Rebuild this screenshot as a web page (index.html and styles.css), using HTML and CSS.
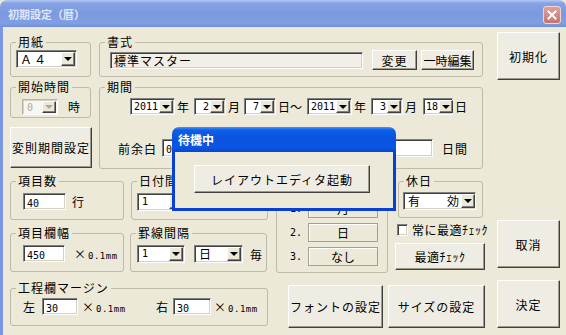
FILE: index.html
```html
<!DOCTYPE html>
<html>
<head>
    <title>初期設定（暦）</title>
    <link rel="stylesheet" href="styles.css">
</head>
<body>
<div class="window">
    <div class="titlebar">
        <span class="title">初期設定（暦）</span>
        <span class="close">
            <svg width="10" height="10" viewBox="0 0 10 10"><path d="M1.5 1.5L8.5 8.5M8.5 1.5L1.5 8.5" stroke="#fff" stroke-width="2" stroke-linecap="square"/></svg>
        </span>
    </div>

    <div class="client">
        <div class="main">
            <!-- paper / format -->
            <div class="row row-top">
                <fieldset class="grp grp-paper">
                    <legend>用紙</legend>
                    <div class="paper-body">
                        <div class="combo combo-paper"><span class="val">Ａ４</span><span class="arrow"></span></div>
                    </div>
                </fieldset>
                <fieldset class="grp grp-format">
                    <legend>書式</legend>
                    <div class="format-body">
                        <div class="input input-readonly input-format">標準マスター</div>
                        <button class="btn btn-change">変更</button>
                        <button class="btn btn-temp">一時編集</button>
                    </div>
                </fieldset>
            </div>

            <!-- start time / period -->
            <div class="row row-mid">
                <div class="col-left">
                    <fieldset class="grp grp-start">
                        <legend>開始時間</legend>
                        <div class="start-body">
                            <div class="combo combo-start disabled"><span class="val num">0</span><span class="arrow"></span></div>
                            <span class="unit-hour">時</span>
                        </div>
                    </fieldset>
                    <button class="btn btn-irregular">変則期間設定</button>
                </div>
                <fieldset class="grp grp-period">
                    <legend>期間</legend>
                    <div class="period-row1">
                        <div class="combo c-year"><span class="val num">2011</span><span class="arrow"></span></div>
                        <span class="u u-5">年</span>
                        <div class="combo c-md"><span class="val num">2</span><span class="arrow"></span></div>
                        <span class="u u-4">月</span>
                        <div class="combo c-md"><span class="val num">7</span><span class="arrow"></span></div>
                        <span class="u u-5">日～</span>
                        <div class="combo c-year"><span class="val num">2011</span><span class="arrow"></span></div>
                        <span class="u u-5">年</span>
                        <div class="combo c-md"><span class="val num">3</span><span class="arrow"></span></div>
                        <span class="u u-6">月</span>
                        <div class="combo c-day"><span class="val num">18</span><span class="arrow"></span></div>
                        <span class="u">日</span>
                    </div>
                    <div class="period-row2">
                        <span class="lbl-before">前余白</span>
                        <div class="input input-pre"><span class="num">0</span></div>
                        <span class="lbl-days">日間</span>
                    </div>
                </fieldset>
            </div>

            <!-- counts / widths / order / holiday -->
            <div class="row row-low">
                <div class="left-block">
                    <div class="sub-row">
                        <fieldset class="grp grp-count">
                            <legend>項目数</legend>
                            <div class="item-body">
                                <div class="input input-count"><span class="num">40</span></div>
                                <span class="unit-line">行</span>
                            </div>
                        </fieldset>
                        <fieldset class="grp grp-date">
                            <legend>日付間隔</legend>
                            <div class="date-body">
                                <div class="combo combo-rule"><span class="val val-left num">1</span><span class="arrow"></span></div>
                            </div>
                        </fieldset>
                    </div>
                    <div class="sub-row sub-row2">
                        <fieldset class="grp grp-count">
                            <legend>項目欄幅</legend>
                            <div class="item-body">
                                <div class="input input-width"><span class="num">450</span></div>
                                <span class="unit-mm unit-mm1">×<span class="mm">0.1mm</span></span>
                            </div>
                        </fieldset>
                        <fieldset class="grp grp-rule">
                            <legend>罫線間隔</legend>
                            <div class="rule-body">
                                <div class="combo combo-rule"><span class="val val-left num">1</span><span class="arrow"></span></div>
                                <div class="combo combo-unit"><span class="val val-left">日</span><span class="arrow"></span></div>
                                <span class="unit-every">毎</span>
                            </div>
                        </fieldset>
                    </div>
                </div>

                <fieldset class="grp grp-order">
                    <div class="order-body">
                        <div class="order-row"><span class="order-no">1.</span><span class="cell">月</span></div>
                        <div class="order-row"><span class="order-no">2.</span><span class="cell">日</span></div>
                        <div class="order-row"><span class="order-no">3.</span><span class="cell">なし</span></div>
                    </div>
                </fieldset>

                <div class="col-holiday">
                    <fieldset class="grp grp-holiday">
                        <legend>休日</legend>
                        <div class="holiday-body">
                            <div class="combo combo-holiday"><span class="val val-left holiday-val">有　　効</span><span class="arrow"></span></div>
                        </div>
                    </fieldset>
                    <label class="check-row"><span class="checkbox"></span><span class="check-text">常に最適ﾁｪｯｸ</span></label>
                    <button class="btn btn-check">最適ﾁｪｯｸ</button>
                </div>
            </div>

            <!-- margins / font / size -->
            <div class="row row-last">
                <fieldset class="grp grp-margin">
                    <legend>工程欄マージン</legend>
                    <div class="margin-body">
                        <span>左</span>
                        <div class="input input-left"><span class="num">30</span></div>
                        <span class="unit-mm unit-mm2">×<span class="mm">0.1mm</span></span>
                        <span class="lbl-right">右</span>
                        <div class="input input-right"><span class="num">30</span></div>
                        <span class="unit-mm unit-mm3">×<span class="mm">0.1mm</span></span>
                    </div>
                </fieldset>
                <button class="btn btn-font">フォントの設定</button>
                <button class="btn btn-size">サイズの設定</button>
            </div>
        </div>

        <div class="side">
            <button class="btn btn-side">初期化</button>
            <button class="btn btn-side btn-cancel">取消</button>
            <button class="btn btn-side btn-ok">決定</button>
        </div>
    </div>

    <!-- waiting dialog lying over the form -->
    <div class="modal">
        <div class="modal-title">待機中</div>
        <div class="modal-body">
            <button class="btn btn-launch">レイアウトエディタ起動</button>
        </div>
    </div>
</div>
</body>
</html>
```

FILE: styles.css
```css
* {
    box-sizing: border-box;
}
body {
    margin: 0;
    font-family: "Noto Sans CJK JP", sans-serif;
    font-size: 12px;
    color: #000;
    background-color: #ece9d8;
}
.window {
    position: relative;
    width: 566px;
    height: 335px;
    background-color: #ece9d8;
    overflow: hidden;
}
.titlebar {
    height: 27px;
    display: flex;
    align-items: center;
    justify-content: space-between;
    padding: 0 5px 0 8px;
    border-radius: 7px 7px 0 0;
    background: linear-gradient(to bottom, #b3c8f2 0%, #86a3e6 12%, #7b99e0 50%, #819fe4 85%, #6f8fd6 100%);
}
.title {
    color: #dfe8fa;
    font-size: 11px;
    font-weight: bold;
}
.close {
    width: 18px;
    height: 18px;
    margin-top: 2px;
    display: flex;
    align-items: center;
    justify-content: center;
    border: 1px solid #f0d6d2;
    border-radius: 3px;
    background: linear-gradient(to bottom, #dba19c, #c77470);
}
.client {
    display: flex;
    width: 566px;
    height: 308px;
    padding: 8px 0 0 7px;
    border-left: 3px solid #7b97e0;
}
.client > *,
.row > *,
.sub-row > *,
.period-row1 > *,
.period-row2 > *,
.format-body > *,
.margin-body > *,
.item-body > *,
.rule-body > * {
    flex-shrink: 0;
}
.main {
    width: 475px;
}
.side {
    width: 63px;
    margin-left: 12px;
    margin-top: -3px;
    display: flex;
    flex-direction: column;
}

/* generic controls */
.row {
    display: flex;
    align-items: flex-start;
}
.grp {
    margin: 0;
    padding: 0;
    min-width: 0;
    border: 1px solid #bdbaa9;
    border-radius: 3px;
}
legend {
    padding: 0 2px;
    margin-left: 5px;
    font-size: 12px;
    line-height: 14px;
    letter-spacing: 1px;
}
.btn {
    font: inherit;
    letter-spacing: 1px;
    white-space: nowrap;
    margin: 0;
    padding: 0;
    color: #000;
    background-color: #efede3;
    border: 1px solid;
    border-color: #fff #404040 #404040 #fff;
    box-shadow: inset -1px -1px #9d9a8c;
    cursor: pointer;
}
.input {
    height: 17px;
    padding: 0 3px;
    line-height: 15px;
    background-color: #fff;
    border: 1px solid;
    border-color: #808080 #fff #fff #808080;
    box-shadow: inset 1px 1px #404040, inset -1px -1px #d4d0c8;
    white-space: nowrap;
}
.input-readonly {
    background-color: #f1efe6;
}
.combo {
    display: flex;
    height: 17px;
    padding: 1px;
    background-color: #fff;
    border: 1px solid;
    border-color: #808080 #fff #fff #808080;
    box-shadow: inset 1px 1px #404040, inset -1px -1px #d4d0c8;
}
.combo .val {
    flex: 1;
    padding: 0 1px;
    line-height: 13px;
    text-align: right;
    white-space: nowrap;
}
.combo .val-left {
    text-align: left;
    padding-left: 3px;
}
.combo .arrow {
    flex: none;
    width: 14px;
    display: flex;
    align-items: center;
    justify-content: center;
    background-color: #ece9d8;
    border: 1px solid;
    border-color: #fff #404040 #404040 #fff;
    box-shadow: inset -1px -1px #808080;
}
.combo .arrow::after {
    content: "";
    border-left: 4px solid transparent;
    border-right: 4px solid transparent;
    border-top: 4px solid #000;
}
.combo.disabled {
    background-color: #f7f6f1;
    border-color: #b8b5a6 #fff #fff #b8b5a6;
    box-shadow: inset 1px 1px #d4d0c8;
}
.combo.disabled .val {
    color: #aca899;
}
.combo.disabled .arrow::after {
    border-top-color: #aca899;
}
.num {
    font-family: "DejaVu Sans Mono", monospace;
    font-size: 10px;
}

/* row: paper / format */
.row-top {
    height: 42px;
}
.grp-paper {
    width: 81px;
    height: 42px;
}
.paper-body {
    padding: 1px 0 0 5px;
}
.combo-paper {
    width: 61px;
    height: 18px;
}
.combo-paper .val {
    text-align: left;
    letter-spacing: 2px;
    padding-left: 2px;
}
.grp-format {
    width: 384px;
    height: 42px;
    margin-left: 8px;
}
.format-body {
    display: flex;
    align-items: center;
    height: 22px;
    padding-left: 10px;
}
.input-format {
    width: 253px;
    letter-spacing: 1px;
}
.btn-change {
    width: 45px;
    height: 20px;
    margin-left: 9px;
}
.btn-temp {
    width: 53px;
    height: 20px;
    margin-left: 4px;
    letter-spacing: 0;
}

/* row: start time / period */
.row-mid {
    margin-top: 3px;
    height: 89px;
}
.col-left {
    width: 82px;
}
.grp-start {
    width: 81px;
    height: 38px;
}
.start-body {
    display: flex;
    align-items: center;
    padding: 4px 0 0 11px;
}
.combo-start {
    width: 36px;
    height: 16px;
}
.combo-start .val {
    text-align: left;
    padding-left: 3px;
}
.unit-hour {
    margin-left: 10px;
}
.btn-irregular {
    width: 82px;
    height: 41px;
    margin-top: 9px;
}
.grp-period {
    width: 384px;
    height: 89px;
    margin-left: 7px;
}
.period-row1 {
    display: flex;
    align-items: center;
    padding: 4px 0 0 30px;
}
.c-year {
    width: 45px;
}
.c-md {
    width: 32px;
}
.c-day {
    width: 30px;
}
.u {
    margin-left: 2px;
    white-space: nowrap;
}
.u-4 {
    margin-right: 4px;
}
.u-5 {
    margin-right: 5px;
}
.u-6 {
    margin-right: 6px;
}
.period-row2 {
    display: flex;
    align-items: center;
    margin-top: 24px;
    padding: 0 16px 0 18px;
}
.lbl-before {
    letter-spacing: 1px;
    width: 44px;
}
.input-pre {
    width: 271px;
    height: 18px;
}
.lbl-days {
    margin-left: 9px;
    letter-spacing: 1px;
}

/* row: counts / order / holiday */
.row-low {
    margin-top: 5px;
}
.left-block {
    width: 258px;
}
.sub-row {
    display: flex;
}
.sub-row2 {
    margin-top: 6px;
}
.grp-count {
    width: 114px;
    height: 46px;
}
.item-body {
    display: flex;
    align-items: center;
    padding: 5px 0 0 12px;
}
.input-count {
    width: 43px;
}
.input-width {
    width: 42px;
}
.unit-line {
    margin-left: 6px;
}
.unit-mm {
    display: inline-block;
    width: 42px;
    white-space: nowrap;
}
.unit-mm .mm {
    margin-left: 2px;
    font-family: "DejaVu Sans Mono", monospace;
    font-size: 9px;
    letter-spacing: 0.5px;
}
.unit-mm1 {
    margin-left: 9px;
}
.grp-date {
    width: 137px;
    height: 46px;
    margin-left: 7px;
}
.date-body {
    padding: 5px 0 0 5px;
}
.grp-rule {
    width: 137px;
    height: 46px;
    margin-left: 6px;
}
.rule-body {
    display: flex;
    align-items: center;
    padding: 5px 0 0 6px;
}
.combo-rule {
    width: 48px;
    height: 18px;
}
.combo-unit {
    width: 49px;
    height: 18px;
    margin-left: 9px;
}
.unit-every {
    margin-left: 7px;
}
.grp-order {
    width: 112px;
    height: 92px;
    margin-top: 7px;
    margin-left: 8px;
}
.order-body {
    padding: 17px 0 0 13px;
    display: flex;
    flex-direction: column;
    gap: 5px;
}
.order-row {
    display: flex;
    align-items: center;
}
.order-no {
    width: 18px;
    font-family: "DejaVu Sans Mono", monospace;
    font-size: 10px;
}
.cell {
    width: 70px;
    height: 19px;
    line-height: 17px;
    text-align: center;
    background-color: #ece9d8;
    border: 1px solid #a3a091;
    box-shadow: inset 1px 1px #fff;
}
.col-holiday {
    width: 90px;
    margin-left: 7px;
}
.grp-holiday {
    width: 85px;
    height: 44px;
    margin-left: 3px;
}
.holiday-body {
    padding: 4px 0 0 4px;
}
.combo-holiday {
    width: 73px;
    height: 18px;
}
.holiday-val {
    letter-spacing: 1px;
}
.check-row {
    display: flex;
    align-items: center;
    width: 93px;
    height: 13px;
    margin-top: 5px;
    padding-left: 2px;
    white-space: nowrap;
}
.checkbox {
    flex: none;
    width: 11px;
    height: 12px;
    background-color: #fff;
    border: 1px solid;
    border-color: #808080 #fff #fff #808080;
    box-shadow: inset 1px 1px #404040, inset -1px -1px #d4d0c8;
}
.check-text {
    margin-left: 4px;
    letter-spacing: 0.5px;
}
.btn-check {
    width: 90px;
    height: 27px;
    margin-top: 7px;
    letter-spacing: 0.5px;
}

/* row: margins / font / size */
.row-last {
    margin-top: 8px;
}
.grp-margin {
    width: 258px;
    height: 45px;
}
.margin-body {
    display: flex;
    align-items: center;
    padding: 3px 0 0 12px;
}
.input-left {
    width: 36px;
    margin-left: 7px;
}
.unit-mm2 {
    margin-left: 4px;
}
.lbl-right {
    margin-left: 32px;
}
.input-right {
    width: 38px;
    margin-left: 5px;
}
.unit-mm3 {
    margin-left: 3px;
}
.btn-font {
    width: 95px;
    height: 43px;
    margin: 4px 0 0 20px;
}
.btn-size {
    width: 97px;
    height: 43px;
    margin: 4px 0 0 5px;
}

/* side buttons */
.btn-side {
    width: 63px;
    height: 48px;
}
.btn-cancel {
    margin-top: 140px;
}
.btn-ok {
    margin-top: 12px;
}

/* waiting dialog */
.modal {
    position: absolute;
    left: 172px;
    top: 127px;
    width: 224px;
}
.modal-title {
    height: 25px;
    line-height: 25px;
    padding-left: 6px;
    color: #fff;
    font-weight: bold;
    border-radius: 7px 7px 0 0;
    background: linear-gradient(to bottom, #4a93f7 0%, #0d5fe8 12%, #0a52de 45%, #0a56e6 80%, #0847c9 100%);
}
.modal-body {
    height: 59px;
    padding: 13px 0 0 19px;
    background-color: #ece9d8;
    border: 3px solid #0a3fd4;
    border-top: 0;
}
.btn-launch {
    width: 176px;
    height: 28px;
}
```
